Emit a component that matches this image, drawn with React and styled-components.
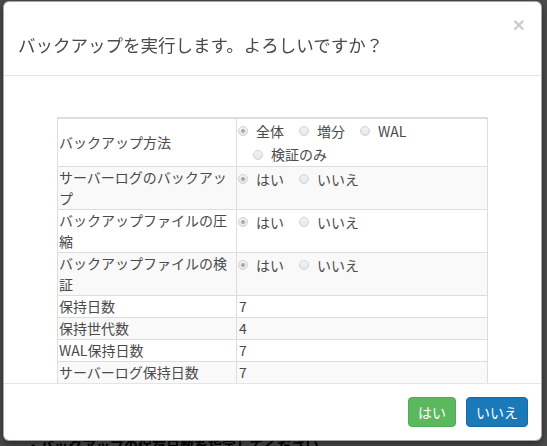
import React from 'react';
import styled, { createGlobalStyle } from 'styled-components';

const GlobalStyle = createGlobalStyle`
  html, body {
    margin: 0;
    padding: 0;
    background: #fff;
    font-family: "Noto Sans CJK JP", "Noto Sans", sans-serif;
    color: #333;
  }
`;

const settings = [
  {
    label: 'バックアップ方法',
    options: ['全体', '増分', 'WAL', '検証のみ'],
    tall: true,
  },
  { label: 'サーバーログのバックアップ', options: ['はい', 'いいえ'] },
  { label: 'バックアップファイルの圧縮', options: ['はい', 'いいえ'] },
  { label: 'バックアップファイルの検証', options: ['はい', 'いいえ'] },
  { label: '保持日数', value: '7' },
  { label: '保持世代数', value: '4' },
  { label: 'WAL保持日数', value: '7' },
  { label: 'サーバーログ保持日数', value: '7' },
];

const Page = styled.div`
  height: 446px;
  padding: 437px 0 0 26px;
  box-sizing: border-box;
  overflow: hidden;
  font-size: 14px;
  line-height: 16px;
  font-weight: bold;
  color: #000;
`;

const Backdrop = styled.div`
  position: fixed;
  inset: 0;
  background: rgba(0, 0, 0, 0.7);
`;

const Modal = styled.div`
  position: fixed;
  top: 1px;
  left: 3px;
  width: 539px;
  height: 440px;
  box-sizing: border-box;
  display: flex;
  flex-direction: column;
  background: #fff;
  border: 1px solid rgba(0, 0, 0, 0.35);
  border-radius: 6px;
  box-shadow: 0 3px 9px rgba(0, 0, 0, 0.5);
  overflow: hidden;
`;

const Header = styled.div`
  display: flex;
  align-items: flex-start;
  padding: 14px 16px 17px 14px;
  border-bottom: 1px solid #e5e5e5;
`;

const Title = styled.h4`
  flex: 1;
  margin: 16px 0 0;
  font-size: 17.5px;
  line-height: 26px;
  font-weight: normal;
  color: #4a4a4a;
`;

const Close = styled.button`
  margin-top: -2px;
  padding: 0;
  border: 0;
  background: transparent;
  font-family: "Liberation Sans", Arial, sans-serif;
  font-size: 21px;
  font-weight: bold;
  line-height: 1;
  color: #000;
  opacity: 0.2;
  cursor: pointer;
`;

const Body = styled.div`
  flex: 1;
  min-height: 0;
  padding-top: 41px;
  overflow: hidden;
`;

const Table = styled.table`
  width: 431px;
  margin: 0 auto;
  border-collapse: collapse;
  font-size: 14px;
  line-height: 21px;
  color: #4a4a4a;
  border: 1px solid #ddd;
  border-top: 2px solid #ddd;
`;

const Row = styled.tr`
  background: ${props => (props.$striped ? '#f9f9f9' : '#fff')};
  border-bottom: 1px solid #ddd;
`;

const Label = styled.td`
  width: 177px;
  padding: 0 0 0 1px;
  vertical-align: middle;
  border-right: 1px solid #ddd;
  height: ${props => (props.$tall ? '46px' : 'auto')};
`;

const Value = styled.td`
  padding: 0 0 0 1px;
  vertical-align: top;
`;

const Plain = styled.span`
  padding-left: 1px;
`;

const Options = styled.div`
  line-height: 23px;
`;

const Option = styled.label`
  display: inline-flex;
  align-items: center;
  white-space: nowrap;
  & + & {
    margin-left: 15px;
  }
`;

const Radio = styled.span`
  display: inline-block;
  position: relative;
  width: 10px;
  height: 10px;
  margin-right: 8px;
  border: 1px solid #d2d2d2;
  border-radius: 50%;
  background: linear-gradient(#f4f4f4, #e6e6e6);
  box-sizing: border-box;

  &::after {
    content: '';
    display: ${props => (props.$checked ? 'block' : 'none')};
    position: absolute;
    top: 2px;
    left: 2px;
    width: 4px;
    height: 4px;
    border-radius: 50%;
    background: #a8a8a8;
  }
`;

const Footer = styled.div`
  display: flex;
  justify-content: flex-end;
  gap: 10px;
  padding: 13px 13px 13px;
  border-top: 1px solid #e5e5e5;
`;

const Button = styled.button`
  height: 30px;
  padding: 0 9px;
  border: 1px solid ${props => props.$border};
  border-radius: 4px;
  background: ${props => props.$bg};
  color: #fff;
  font-family: "Noto Sans CJK JP", sans-serif;
  font-size: 14px;
  line-height: 28px;
  cursor: pointer;
`;

const RadioSet = ({ options }) => (
  <Options>
    {options.map((opt, idx) => (
      <Option key={opt}>
        <Radio $checked={idx === 0} />
        {opt}
      </Option>
    ))}
  </Options>
);

export default function App() {
  return (
    <>
      <GlobalStyle />
      <Page>・バックアップの保存日数を指定してください。</Page>
      <Backdrop />
      <Modal>
        <Header>
          <Title>バックアップを実行します。よろしいですか？</Title>
          <Close aria-label="閉じる">×</Close>
        </Header>
        <Body>
          <Table>
            <tbody>
              {settings.map((row, idx) => (
                <Row key={row.label} $striped={idx % 2 === 1}>
                  <Label $tall={row.tall}>{row.label}</Label>
                  <Value>
                    {row.options ? (
                      <RadioSet options={row.options} />
                    ) : (
                      <Plain>{row.value}</Plain>
                    )}
                  </Value>
                </Row>
              ))}
            </tbody>
          </Table>
        </Body>
        <Footer>
          <Button $bg="#5cb85c" $border="#4cae4c">はい</Button>
          <Button $bg="#1a7ab9" $border="#166aa1">いいえ</Button>
        </Footer>
      </Modal>
    </>
  );
}
